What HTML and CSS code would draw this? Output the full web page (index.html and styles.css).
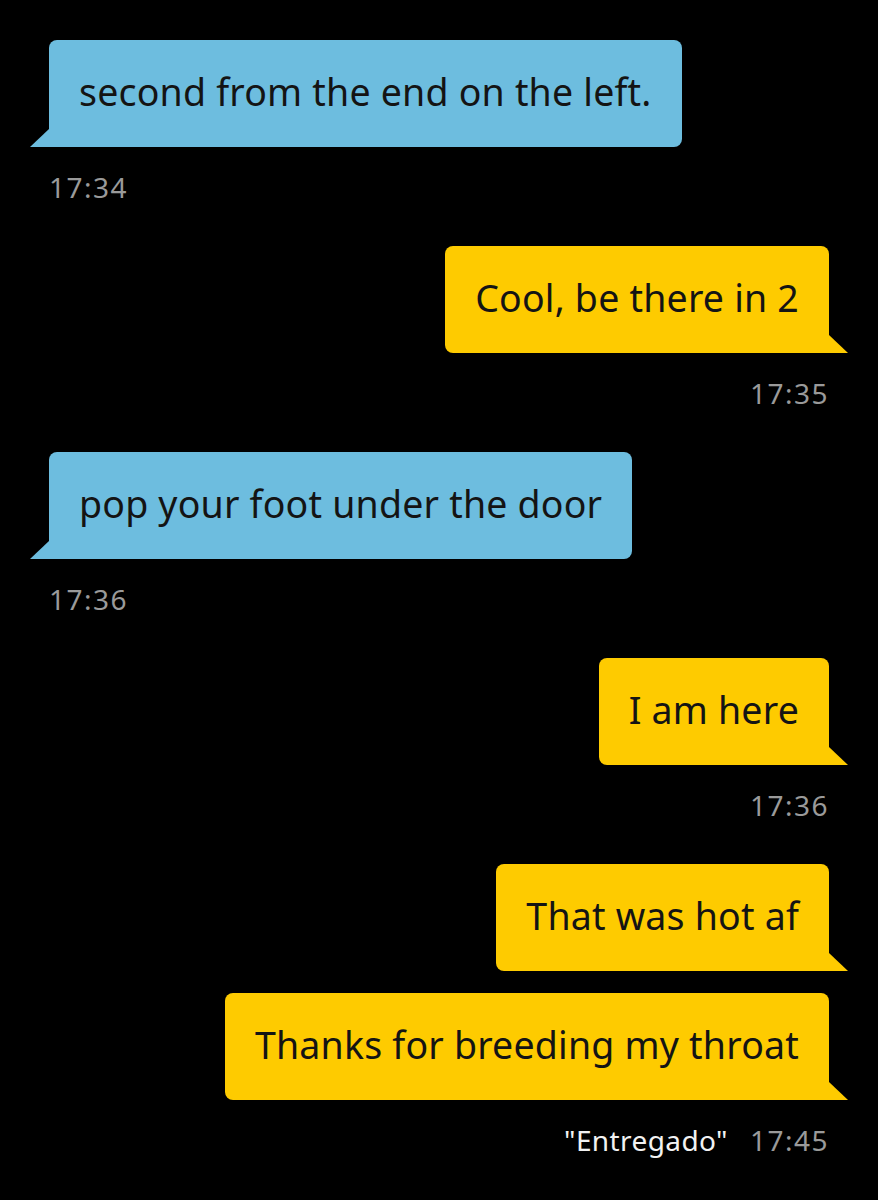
FILE: index.html
```html
<!DOCTYPE html>
<html lang="en">
<head>
    <meta charset="UTF-8">
    <meta name="viewport" content="width=device-width, initial-scale=1.0">
    <title>Chat</title>
    <link rel="stylesheet" href="styles.css">
</head>
<body>
<div id="chat">
    <div class="group in">
        <div class="bubble">second from the end on the left.</div>
        <div class="meta"><span class="time">17:34</span></div>
    </div>

    <div class="group out">
        <div class="bubble">Cool, be there in 2</div>
        <div class="meta"><span class="time">17:35</span></div>
    </div>

    <div class="group in">
        <div class="bubble">pop your foot under the door</div>
        <div class="meta"><span class="time">17:36</span></div>
    </div>

    <div class="group out">
        <div class="bubble">I am here</div>
        <div class="meta"><span class="time">17:36</span></div>
    </div>

    <div class="group out">
        <div class="bubble">That was hot af</div>
        <div class="bubble">Thanks for breeding my throat</div>
        <div class="meta"><span class="status">"Entregado"</span><span class="time">17:45</span></div>
    </div>
</div>
</body>
</html>
```

FILE: styles.css
```css
* {
    margin: 0;
    padding: 0;
    box-sizing: border-box;
    font-family: "Noto Sans", "Open Sans", sans-serif;
}

body {
    background-color: #000;
    width: 878px;
    min-height: 1200px;
}

#chat {
    display: flex;
    flex-direction: column;
    padding: 40px 49px 0 49px;
    gap: 43px;
}

.group {
    display: flex;
    flex-direction: column;
    gap: 22px;
}

.group.in {
    align-items: flex-start;
}

.group.out {
    align-items: flex-end;
}

.bubble {
    position: relative;
    height: 107px;
    display: flex;
    align-items: center;
    padding: 0 30px 4px 30px;
    font-size: 37.5px;
    letter-spacing: 0.2px;
    color: #141414;
    border-radius: 8px;
    white-space: nowrap;
}

.in .bubble {
    background-color: #6dbddf;
    border-bottom-left-radius: 0;
}

.out .bubble {
    background-color: #fecb00;
    border-bottom-right-radius: 0;
}

.bubble::after {
    content: "";
    position: absolute;
    bottom: 0;
    width: 0;
    height: 0;
    border-bottom: 18px solid transparent;
}

.in .bubble::after {
    left: -19px;
    border-left: 19px solid transparent;
    border-bottom-color: #6dbddf;
}

.out .bubble::after {
    right: -19px;
    border-right: 19px solid transparent;
    border-bottom-color: #fecb00;
}

.meta {
    display: flex;
    gap: 22px;
    margin-top: 2px;
    font-size: 28px;
    line-height: 32px;
}

.time {
    color: #9a9a9a;
    letter-spacing: 1.5px;
}

.status {
    color: #f2f2f2;
    letter-spacing: 0.4px;
}
```
